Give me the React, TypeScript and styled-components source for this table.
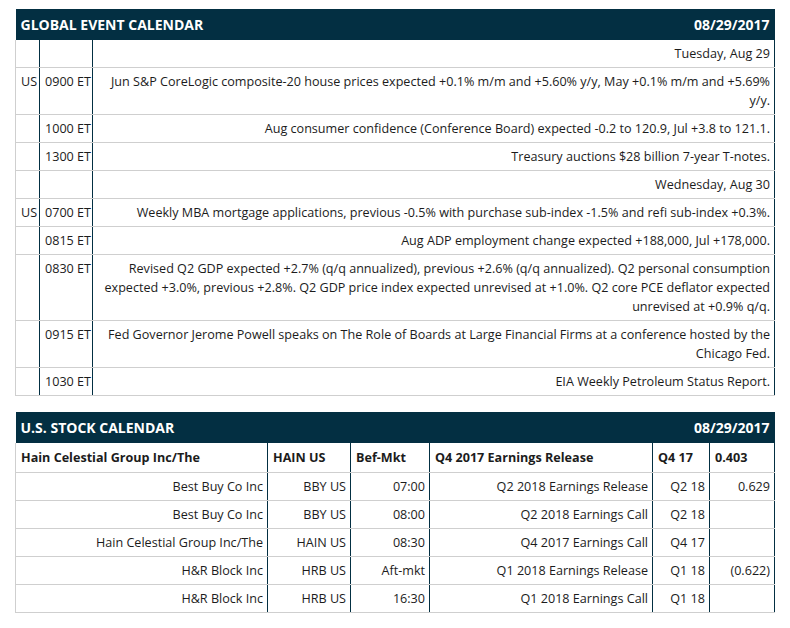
import React from 'react';
import styled, { createGlobalStyle } from 'styled-components';

const GlobalStyle = createGlobalStyle`
  body {
    margin: 0;
    padding: 9px 15px;
    background: #fff;
    font-family: 'Open Sans', 'Liberation Sans', sans-serif;
    color: #1c1c1c;
  }
`;

const Page = styled.div`
  width: 760px;
  display: flex;
  flex-direction: column;
  gap: 16px;
`;

const Table = styled.table`
  width: 100%;
  border-collapse: collapse;
  table-layout: fixed;
  font-size: 12.6px;
  line-height: 19px;
`;

const Col = styled.col<{ w?: number }>`
  width: ${(p) => (p.w ? `${p.w}px` : 'auto')};
`;

const TitleCell = styled.th`
  background: #032f42;
  color: #fff;
  padding: 6px 5px;
  font-size: 14px;
  font-weight: 700;
  line-height: 19px;
  text-align: left;
`;

const TitleBar = styled.div`
  display: flex;
  justify-content: space-between;
  align-items: center;
`;

const Cell = styled.td<{ align?: 'left' | 'right'; bold?: boolean; nowrap?: boolean }>`
  padding: ${(p) => (p.bold ? '5px' : '4px')} 4px ${(p) => (p.bold ? '5px' : '4px')} 5px;
  vertical-align: top;
  text-align: ${(p) => p.align || 'right'};
  font-weight: ${(p) => (p.bold ? 700 : 400)};
  white-space: ${(p) => (p.nowrap ? 'nowrap' : 'normal')};
  border-right: 1px solid #032f42;
  border-bottom: 1px solid #cfcfcf;

  &:first-child {
    border-left: 1px solid #cfcfcf;
  }
`;

type EventRow = { region?: string; time?: string; text: string };

const events: EventRow[] = [
  { text: 'Tuesday, Aug 29' },
  {
    region: 'US',
    time: '0900 ET',
    text: 'Jun S&P CoreLogic composite-20 house prices expected +0.1% m/m and +5.60% y/y, May +0.1% m/m and +5.69% y/y.',
  },
  { time: '1000 ET', text: 'Aug consumer confidence (Conference Board) expected -0.2 to 120.9, Jul +3.8 to 121.1.' },
  { time: '1300 ET', text: 'Treasury auctions $28 billion 7-year T-notes.' },
  { text: 'Wednesday, Aug 30' },
  {
    region: 'US',
    time: '0700 ET',
    text: 'Weekly MBA mortgage applications, previous -0.5% with purchase sub-index -1.5% and refi sub-index +0.3%.',
  },
  { time: '0815 ET', text: 'Aug ADP employment change expected +188,000, Jul +178,000.' },
  {
    time: '0830 ET',
    text: 'Revised Q2 GDP expected +2.7% (q/q annualized), previous +2.6% (q/q annualized). Q2 personal consumption expected +3.0%, previous +2.8%. Q2 GDP price index expected unrevised at +1.0%. Q2 core PCE deflator expected unrevised at +0.9% q/q.',
  },
  {
    time: '0915 ET',
    text: 'Fed Governor Jerome Powell speaks on The Role of Boards at Large Financial Firms at a conference hosted by the Chicago Fed.',
  },
  { time: '1030 ET', text: 'EIA Weekly Petroleum Status Report.' },
];

type StockRow = [string, string, string, string, string, string];

const stockHead: StockRow = ['Hain Celestial Group Inc/The', 'HAIN US', 'Bef-Mkt', 'Q4 2017 Earnings Release', 'Q4 17', '0.403'];

const stocks: StockRow[] = [
  ['Best Buy Co Inc', 'BBY US', '07:00', 'Q2 2018 Earnings Release', 'Q2 18', '0.629'],
  ['Best Buy Co Inc', 'BBY US', '08:00', 'Q2 2018 Earnings Call', 'Q2 18', ''],
  ['Hain Celestial Group Inc/The', 'HAIN US', '08:30', 'Q4 2017 Earnings Call', 'Q4 17', ''],
  ['H&R Block Inc', 'HRB US', 'Aft-mkt', 'Q1 2018 Earnings Release', 'Q1 18', '(0.622)'],
  ['H&R Block Inc', 'HRB US', '16:30', 'Q1 2018 Earnings Call', 'Q1 18', ''],
];

const Title = ({ name, date, span }: { name: string; date: string; span: number }) => (
  <thead>
    <tr>
      <TitleCell colSpan={span}>
        <TitleBar>
          <span>{name}</span>
          <span>{date}</span>
        </TitleBar>
      </TitleCell>
    </tr>
  </thead>
);

const App = () => (
  <Page>
    <GlobalStyle />
    <Table>
      <colgroup>
        <Col w={24} />
        <Col w={53} />
        <Col />
      </colgroup>
      <Title name="GLOBAL EVENT CALENDAR" date="08/29/2017" span={3} />
      <tbody>
        {events.map((e, i) => (
          <tr key={i}>
            <Cell align="left" nowrap>
              {e.region}
            </Cell>
            <Cell align="left" nowrap>
              {e.time}
            </Cell>
            <Cell>{e.text}</Cell>
          </tr>
        ))}
      </tbody>
    </Table>
    <Table>
      <colgroup>
        <Col w={252} />
        <Col w={83} />
        <Col w={79} />
        <Col w={223} />
        <Col w={57} />
        <Col />
      </colgroup>
      <Title name="U.S. STOCK CALENDAR" date="08/29/2017" span={6} />
      <tbody>
        <tr>
          {stockHead.map((c, i) => (
            <Cell key={i} align="left" bold nowrap>
              {c}
            </Cell>
          ))}
        </tr>
        {stocks.map((row, i) => (
          <tr key={i}>
            {row.map((c, j) => (
              <Cell key={j} nowrap>
                {c}
              </Cell>
            ))}
          </tr>
        ))}
      </tbody>
    </Table>
  </Page>
);

export default App;
